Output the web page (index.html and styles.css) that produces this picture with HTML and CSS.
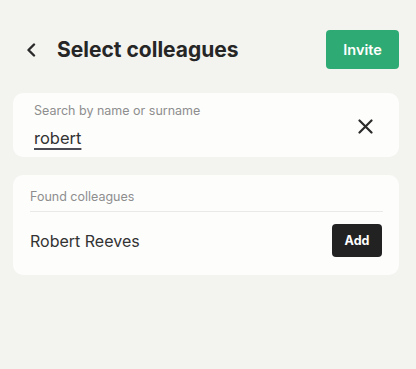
FILE: index.html
```html
<!DOCTYPE html>
<html lang="en">
<head>
  <meta charset="UTF-8" />
  <meta name="viewport" content="width=device-width, initial-scale=1.0" />
  <title>Select colleagues</title>
  <link rel="stylesheet" href="styles.css">
</head>
<body>
  <header class="top-bar">
    <button class="back-button" aria-label="Back">
      <svg width="10" height="14" viewBox="0 0 10 14">
        <path d="M8 1.5 L2.5 7 L8 12.5" fill="none" stroke="#2a2a2a" stroke-width="2.4" stroke-linecap="round" stroke-linejoin="round"/>
      </svg>
    </button>
    <h1>Select colleagues</h1>
    <button class="invite-button">Invite</button>
  </header>

  <main>
    <section class="card search-card">
      <div class="search-field">
        <label for="search">Search by name or surname</label>
        <div class="search-value" id="search">robert</div>
      </div>
      <button class="clear-button" aria-label="Clear">
        <svg width="15" height="15" viewBox="0 0 15 15">
          <path d="M1.5 1.5 L13.5 13.5 M13.5 1.5 L1.5 13.5" fill="none" stroke="#2a2a2a" stroke-width="2.2" stroke-linecap="round"/>
        </svg>
      </button>
    </section>

    <section class="card results-card">
      <p class="results-title">Found colleagues</p>
      <div class="result-row">
        <span class="result-name">Robert Reeves</span>
        <button class="add-button">Add</button>
      </div>
    </section>
  </main>
</body>
</html>
```

FILE: styles.css
```css
body {
  font-family: 'Inter', 'Liberation Sans', sans-serif;
  margin: 0;
  padding: 0 17px 0 13px;
  background-color: #f3f3f0;
  color: #2a2a2a;
  min-height: 100vh;
  box-sizing: border-box;
}

button {
  font-family: inherit;
  border: none;
  background: none;
  padding: 0;
  cursor: pointer;
}

/* header */
.top-bar {
  display: flex;
  align-items: center;
  height: 39px;
  margin-top: 30px;
}
.back-button {
  display: flex;
  margin-left: 13px;
  width: 10px;
  height: 14px;
}
.top-bar h1 {
  margin: 0 0 0 21px;
  font-size: 21px;
  font-weight: 700;
  color: #262626;
}
.invite-button {
  margin-left: auto;
  width: 73px;
  height: 39px;
  border-radius: 4px;
  background-color: #2eab74;
  color: #fff;
  font-size: 14.5px;
  font-weight: 600;
}

/* cards */
.card {
  background-color: #fdfdfc;
  border-radius: 10px;
}

.search-card {
  display: flex;
  align-items: center;
  height: 64px;
  margin-top: 24px;
  padding: 10px 26px 8px 21px;
  box-sizing: border-box;
}
.search-field {
  flex: 1;
}
.search-field label {
  display: block;
  font-size: 12.5px;
  line-height: 16px;
  color: #8e8e8e;
}
.search-value {
  margin-top: 8px;
  font-size: 16.5px;
  line-height: 22px;
  color: #333;
  text-decoration: underline;
  text-decoration-color: #4a4a52;
  text-decoration-thickness: 2px;
  text-underline-offset: 4px;
}
.clear-button {
  display: flex;
}

.results-card {
  margin-top: 18px;
  padding: 14px 16px 18px 17px;
}
.results-title {
  margin: 0;
  font-size: 12.5px;
  line-height: 16px;
  color: #8e8e8e;
  padding-bottom: 6px;
  border-bottom: 1px solid #e9e9e7;
}
.result-row {
  display: flex;
  align-items: center;
  justify-content: space-between;
  margin-top: 12px;
}
.result-name {
  font-size: 16px;
  color: #333;
}
.add-button {
  width: 50px;
  height: 33px;
  margin-right: 1px;
  border-radius: 4px;
  background-color: #222;
  color: #fff;
  font-size: 12.5px;
  font-weight: 700;
}
```
